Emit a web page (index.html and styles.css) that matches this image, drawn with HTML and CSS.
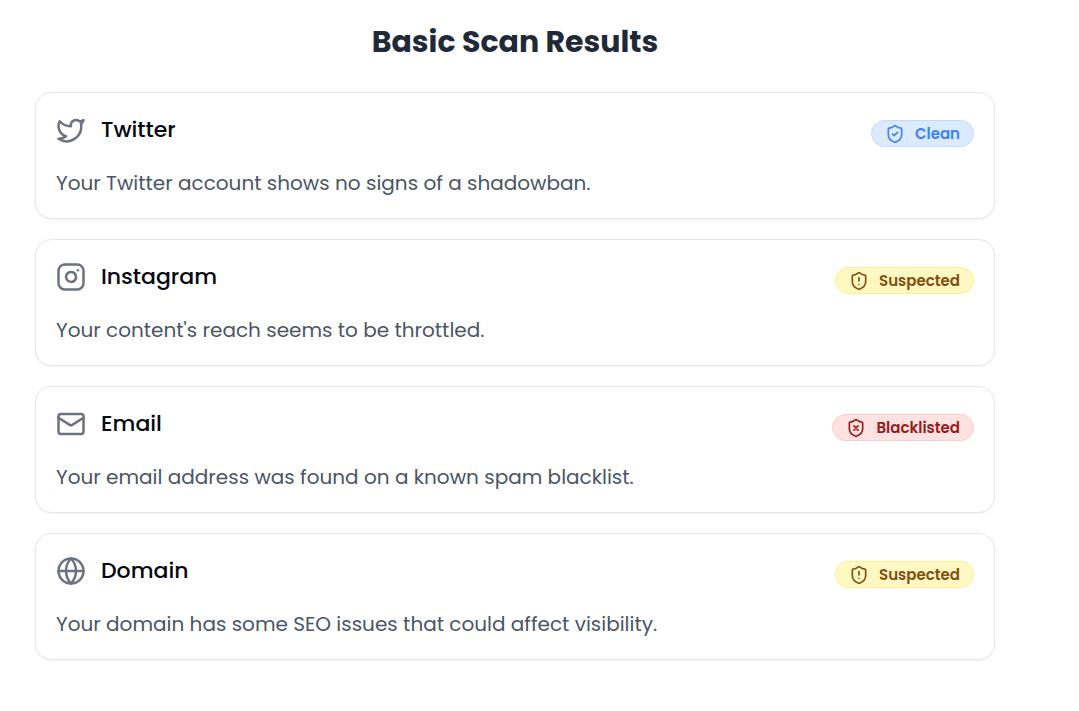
FILE: index.html
```html
<!DOCTYPE html>
<html lang="en">
<head>
    <meta charset="UTF-8">
    <meta name="viewport" content="width=device-width, initial-scale=1.0">
    <title>Basic Scan Results</title>
    <link rel="stylesheet" href="styles.css">
</head>
<body>
    <main class="results">
        <h1>Basic Scan Results</h1>

        <section class="card">
            <div class="card-header">
                <svg class="platform-icon" viewBox="0 0 24 24" aria-hidden="true">
                    <path d="M22 4s-.7 2.1-2 3.4c1.6 10-9.4 17.3-18 11.6 2.2.1 4.4-.6 6-2C3 15.5.5 9.6 3 5c2.2 2.6 5.6 4.1 9 4-.9-4.2 4-6.6 7-3.8 1.1 0 3-1.2 3-1.2z"/>
                </svg>
                <h2>Twitter</h2>
                <span class="badge clean">
                    <svg viewBox="0 0 24 24" aria-hidden="true">
                        <path d="M20 13c0 5-3.5 7.5-7.66 8.95a1 1 0 0 1-.67-.01C7.5 20.5 4 18 4 13V6a1 1 0 0 1 1-1c2 0 4.5-1.2 6.24-2.72a1.17 1.17 0 0 1 1.52 0C14.51 3.81 17 5 19 5a1 1 0 0 1 1 1z"/>
                        <path d="m9 12 2 2 4-4"/>
                    </svg>
                    Clean
                </span>
            </div>
            <p>Your Twitter account shows no signs of a shadowban.</p>
        </section>

        <section class="card">
            <div class="card-header">
                <svg class="platform-icon" viewBox="0 0 24 24" aria-hidden="true">
                    <rect x="2" y="2" width="20" height="20" rx="5"/>
                    <path d="M16 11.37A4 4 0 1 1 12.63 8 4 4 0 0 1 16 11.37z"/>
                    <path d="M17.5 6.5h.01"/>
                </svg>
                <h2>Instagram</h2>
                <span class="badge suspected">
                    <svg viewBox="0 0 24 24" aria-hidden="true">
                        <path d="M20 13c0 5-3.5 7.5-7.66 8.95a1 1 0 0 1-.67-.01C7.5 20.5 4 18 4 13V6a1 1 0 0 1 1-1c2 0 4.5-1.2 6.24-2.72a1.17 1.17 0 0 1 1.52 0C14.51 3.81 17 5 19 5a1 1 0 0 1 1 1z"/>
                        <path d="M12 8v4M12 16h.01"/>
                    </svg>
                    Suspected
                </span>
            </div>
            <p>Your content's reach seems to be throttled.</p>
        </section>

        <section class="card">
            <div class="card-header">
                <svg class="platform-icon" viewBox="0 0 24 24" aria-hidden="true">
                    <rect x="2" y="4" width="20" height="16" rx="2"/>
                    <path d="m22 7-8.97 5.7a1.94 1.94 0 0 1-2.06 0L2 7"/>
                </svg>
                <h2>Email</h2>
                <span class="badge blacklisted">
                    <svg viewBox="0 0 24 24" aria-hidden="true">
                        <path d="M20 13c0 5-3.5 7.5-7.66 8.95a1 1 0 0 1-.67-.01C7.5 20.5 4 18 4 13V6a1 1 0 0 1 1-1c2 0 4.5-1.2 6.24-2.72a1.17 1.17 0 0 1 1.52 0C14.51 3.81 17 5 19 5a1 1 0 0 1 1 1z"/>
                        <path d="m14.5 9.5-5 5M9.5 9.5l5 5"/>
                    </svg>
                    Blacklisted
                </span>
            </div>
            <p>Your email address was found on a known spam blacklist.</p>
        </section>

        <section class="card">
            <div class="card-header">
                <svg class="platform-icon" viewBox="0 0 24 24" aria-hidden="true">
                    <circle cx="12" cy="12" r="10"/>
                    <path d="M12 2a14.5 14.5 0 0 0 0 20 14.5 14.5 0 0 0 0-20M2 12h20"/>
                </svg>
                <h2>Domain</h2>
                <span class="badge suspected">
                    <svg viewBox="0 0 24 24" aria-hidden="true">
                        <path d="M20 13c0 5-3.5 7.5-7.66 8.95a1 1 0 0 1-.67-.01C7.5 20.5 4 18 4 13V6a1 1 0 0 1 1-1c2 0 4.5-1.2 6.24-2.72a1.17 1.17 0 0 1 1.52 0C14.51 3.81 17 5 19 5a1 1 0 0 1 1 1z"/>
                        <path d="M12 8v4M12 16h.01"/>
                    </svg>
                    Suspected
                </span>
            </div>
            <p>Your domain has some SEO issues that could affect visibility.</p>
        </section>
    </main>
</body>
</html>
```
FILE: styles.css
```css
* {
    box-sizing: border-box;
}

body {
    margin: 0;
    background-color: white;
    font-family: Poppins, Inter, sans-serif;
}

.results {
    display: flex;
    flex-direction: column;
    gap: 20px;
    padding: 22px 84px 20px 35px;
}

h1, h2, p {
    margin: 0;
}

h1 {
    margin-bottom: 10px;
    color: #1f2937;
    font-size: 30px;
    font-weight: 700;
    line-height: 40px;
    text-align: center;
}

.card {
    padding: 20px;
    border: 1px solid #e5e7eb;
    border-radius: 16px;
    background-color: white;
    box-shadow: 0 1px 2px rgba(0, 0, 0, 0.05);
}

.card-header {
    display: flex;
    align-items: flex-end;
    margin-bottom: 21px;
}

svg {
    flex: none;
    fill: none;
    stroke: currentColor;
    stroke-width: 2;
    stroke-linecap: round;
    stroke-linejoin: round;
}

.platform-icon {
    align-self: center;
    width: 30px;
    height: 30px;
    margin-right: 15px;
    color: #6b7280;
}

h2 {
    color: #030712;
    font-size: 22px;
    font-weight: 500;
    line-height: 34px;
}

p {
    color: #4b5563;
    font-size: 20px;
    line-height: 30px;
}

.badge {
    display: flex;
    align-items: center;
    gap: 10px;
    height: 27px;
    margin-left: auto;
    padding: 0 13px;
    border: 1px solid;
    border-radius: 14px;
    font-size: 15px;
    font-weight: 600;
}

.badge svg {
    width: 20px;
    height: 20px;
}

.clean {
    border-color: #bfdbfe;
    background-color: #dbeafe;
    color: #3b82f6;
}

.suspected {
    border-color: #fef08a;
    background-color: #fef9c3;
    color: #854d0e;
}

.blacklisted {
    border-color: #fecaca;
    background-color: #fee2e2;
    color: #991b1b;
}
```
